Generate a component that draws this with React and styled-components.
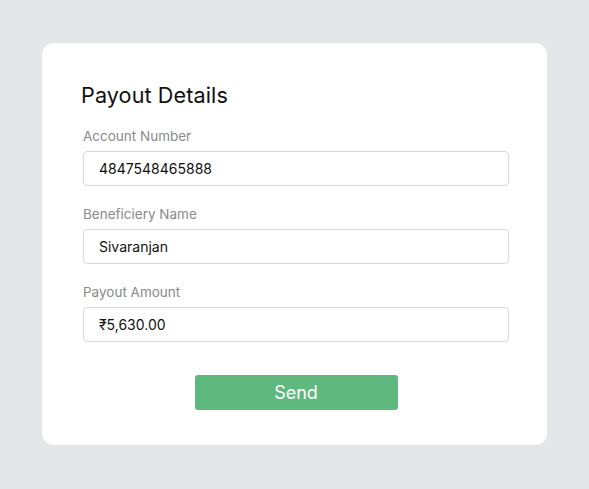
import React from "react";
import styled, { createGlobalStyle } from "styled-components";

const Global = createGlobalStyle`
  html, body { margin: 0; padding: 0; }
  body {
    background: #e5e6ea;
    font-family: Inter, "Open Sans", "DejaVu Sans", sans-serif;
  }
`;

const Page = styled.div`
  box-sizing: border-box;
  width: 589px;
  height: 489px;
  padding-top: 43px;
  display: flex;
  justify-content: center;
  align-items: flex-start;
`;

const Card = styled.div`
  box-sizing: border-box;
  width: 505px;
  height: 402px;
  background: #ffffff;
  border-radius: 12px;
  padding: 37px 38px 34px 41px;
  display: flex;
  flex-direction: column;
`;

const Title = styled.h2`
  margin: 0 0 16px -2px;
  font-size: 21.6px;
  line-height: 30px;
  font-weight: 400;
  letter-spacing: 0.1px;
  color: #111;
`;

const Field = styled.div`
  display: flex;
  flex-direction: column;
  gap: 5px;
  margin-bottom: ${(p) => p.$mb || 18}px;
`;

const Label = styled.label`
  font-size: 13.5px;
  line-height: 20px;
  color: #8a8a8a;
`;

const Input = styled.input`
  box-sizing: border-box;
  height: 35px;
  width: 100%;
  border: 1px solid #d8d8d8;
  border-radius: 4px;
  padding: 0 15px;
  font-family: inherit;
  font-size: 14px;
  color: #111;
  outline: none;
`;

const Button = styled.button`
  align-self: center;
  width: 203px;
  height: 35px;
  border: none;
  border-radius: 3px;
  background: #5fb97f;
  color: #fff;
  font-family: inherit;
  font-size: 18px;
  cursor: pointer;
`;

const fields = [
  { label: "Account Number", value: "4847548465888" },
  { label: "Beneficiery Name", value: "Sivaranjan" },
  { label: "Payout Amount", value: "₹5,630.00", mb: 33 },
];

export default function App() {
  return (
    <>
      <Global />
      <Page>
        <Card>
          <Title>Payout Details</Title>
          {fields.map((f) => (
            <Field key={f.label} $mb={f.mb}>
              <Label>{f.label}</Label>
              <Input defaultValue={f.value} readOnly />
            </Field>
          ))}
          <Button>Send</Button>
        </Card>
      </Page>
    </>
  );
}
